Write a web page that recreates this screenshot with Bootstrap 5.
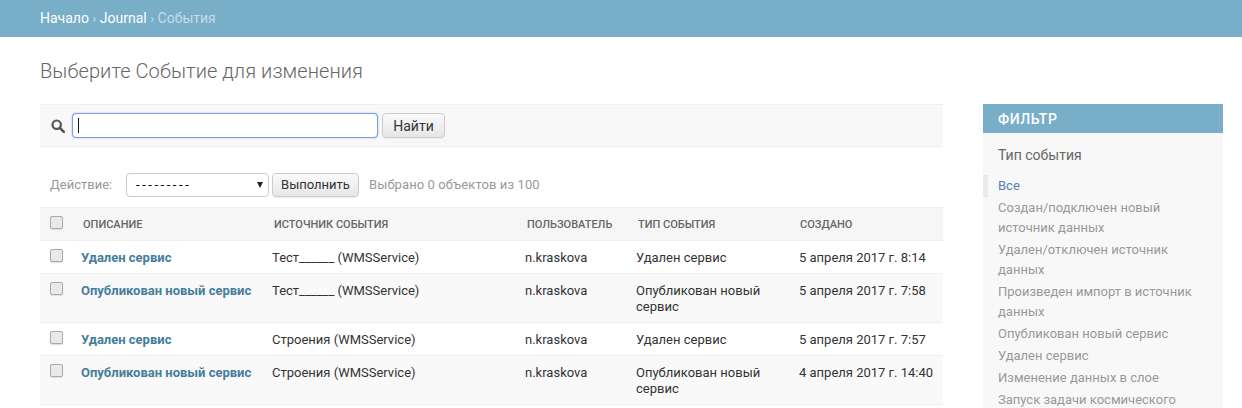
<!DOCTYPE html>
<html lang="ru">
<head>
<meta charset="utf-8">
<title>Выберите Событие для изменения</title>
<link href="https://cdn.jsdelivr.net/npm/bootstrap@5.3.0/dist/css/bootstrap.min.css" rel="stylesheet">
<style>
html,body{height:408px;overflow:hidden}
body{font-family:Roboto,"Liberation Sans",sans-serif;font-size:13px;color:#333;background:#fff}
.adm-top{height:37px;background:#79aec8;padding:0 40px;font-size:14px;line-height:37px;color:#c4dce8}
.adm-top a{color:#fff;text-decoration:none}
.adm-top .sep{color:#c4dce8;font-size:13px}
.adm-wrap{padding:0 19px 0 40px}
.adm-title{font-size:20px;font-weight:300;color:#666;line-height:24px;margin:22px 0 21px;letter-spacing:.07px}
.adm-main{width:903px}
.adm-side{width:240px;height:304px;background:#f8f8f8;overflow:hidden}
.adm-search{height:43px;background:#f8f8f8;border-top:1px solid #eee;border-bottom:1px solid #eee;padding:0 10px;gap:4px}
.adm-lens{margin:0 -4px 0 1px;flex-shrink:0}
.adm-field{position:relative;margin-left:7px}
.adm-field .form-control{width:306px;height:25px;padding:2px 5px;border:1px solid #7a9fdc;border-radius:4px;box-shadow:0 0 2px #9dbcf0;font-size:13px;caret-color:#000}
.adm-caret{position:absolute;left:6px;top:5px;width:1px;height:15px;background:#111}
.adm-btn{font-size:13px;line-height:16px;padding:3px 9px;border:1px solid #ccc;border-radius:4px;color:#333;background:linear-gradient(#fafafa,#e6e6e6);box-shadow:0 1px 0 #eee}
.adm-search .adm-btn{height:25px;width:63px;padding:0;font-size:14px}
.adm-actions{height:24px;margin-top:26px;padding-left:10px;color:#999}
.adm-actions label{width:76px;font-size:13px}
.adm-select{width:143px;height:24px;border:1px solid #ccc;border-radius:4px;background:#fff;padding:0 9px;color:#000;font-size:13px;line-height:22px;position:relative;margin-right:3px;letter-spacing:2.55px}
.adm-select::after{content:"";position:absolute;right:5px;top:8px;border:3px solid transparent;border-top:6px solid #222;border-bottom:0}
.adm-actions .adm-btn{height:24px;width:87px;padding:0}
.adm-count{margin-left:10px;letter-spacing:.1px}
.adm-table{margin:10px 0 0;table-layout:fixed;width:903px;--bs-table-bg:transparent;color:#333}
.adm-table th,.adm-table td{border:0;border-bottom:1px solid #eee;font-size:13px;line-height:16px;vertical-align:top}
.adm-table thead th{background:#f6f6f6;height:33px;border-top:1px solid #eee;padding:9px 2px 0;font-size:11px;font-weight:500;color:#666;text-transform:uppercase;line-height:16px}
.adm-table thead th:last-child{padding-left:1px}
.adm-table td,.adm-table tbody th{padding:9px 0 7px;height:33px}
.adm-table tbody th a{color:#447e9b;font-weight:700;text-decoration:none}
.adm-table tbody th{font-weight:700}
.adm-table tbody tr:nth-child(even){background:#f9f9f9}
.adm-table .form-check-input{width:13px;height:13px;margin:-1px 0 0 10px;border:1px solid #aaa;border-radius:2px;background:#e9e9e9;box-shadow:0 1px 1px #ddd;display:block}
.adm-table thead .form-check-input{margin-left:8px}
.adm-side h2{background:#79aec8;color:#fff;height:29px;line-height:30px;margin:0;padding:0 15px;font-size:14px;font-weight:500;letter-spacing:.6px;text-transform:uppercase}
.adm-side h3{font-size:14px;font-weight:400;color:#666;margin:14px 15px 0;line-height:16px}
.adm-side ul{margin:12px 0 0;padding:0}
.adm-side li{padding:1px 15px;line-height:20px;color:#999}
.adm-side li a{color:#999;text-decoration:none}
.adm-side li.on{border-left:5px solid #eaeaea;padding-left:10px}
.adm-side li.on a{color:#5b80b2}
</style>
</head>
<body>
<div class="adm-top"><a href="#">Начало</a> <span class="sep">›</span> <a href="#">Journal</a> <span class="sep">›</span> События</div>
<div class="adm-wrap">
  <h1 class="adm-title">Выберите Событие для изменения</h1>
  <div class="d-flex justify-content-between">
    <div class="adm-main">
      <form class="adm-search d-flex align-items-center">
        <svg class="adm-lens" width="14" height="14" viewBox="0 0 14 14" aria-hidden="true"><circle cx="5.7" cy="5.7" r="4.2" fill="none" stroke="#555" stroke-width="2.2"/><path d="M8.8 8.8 12.8 12.8" stroke="#555" stroke-width="2.6" stroke-linecap="round"/></svg>
        <div class="adm-field"><input class="form-control" type="text" aria-label="Поиск"><span class="adm-caret"></span></div>
        <button class="adm-btn" type="button">Найти</button>
      </form>
      <div class="adm-actions d-flex align-items-center">
        <label>Действие:</label>
        <div class="adm-select">---------</div>
        <button class="adm-btn" type="button">Выполнить</button>
        <span class="adm-count">Выбрано 0 объектов из 100</span>
      </div>
      <table class="table adm-table">
        <colgroup><col style="width:41px"><col style="width:191px"><col style="width:253px"><col style="width:111px"><col style="width:163px"><col></colgroup>
        <thead><tr>
          <th><input class="form-check-input" type="checkbox" aria-label="Все"></th>
          <th>Описание</th><th>Источник события</th><th>Пользователь</th><th>Тип события</th><th>Создано</th>
        </tr></thead>
        <tbody>
          <tr><td><input class="form-check-input" type="checkbox" aria-label="Выбрать"></td><th><a href="#">Удален сервис</a></th><td>Тест______ (WMSService)</td><td>n.kraskova</td><td>Удален сервис</td><td>5 апреля 2017 г. 8:14</td></tr>
          <tr><td><input class="form-check-input" type="checkbox" aria-label="Выбрать"></td><th><a href="#">Опубликован новый сервис</a></th><td>Тест______ (WMSService)</td><td>n.kraskova</td><td>Опубликован новый сервис</td><td>5 апреля 2017 г. 7:58</td></tr>
          <tr><td><input class="form-check-input" type="checkbox" aria-label="Выбрать"></td><th><a href="#">Удален сервис</a></th><td>Строения (WMSService)</td><td>n.kraskova</td><td>Удален сервис</td><td>5 апреля 2017 г. 7:57</td></tr>
          <tr><td><input class="form-check-input" type="checkbox" aria-label="Выбрать"></td><th><a href="#">Опубликован новый сервис</a></th><td>Строения (WMSService)</td><td>n.kraskova</td><td>Опубликован новый сервис</td><td>4 апреля 2017 г. 14:40</td></tr>
        </tbody>
      </table>
    </div>
    <aside class="adm-side">
      <h2>Фильтр</h2>
      <h3>Тип события</h3>
      <ul class="list-unstyled">
        <li class="on"><a href="#">Все</a></li>
        <li><a href="#">Создан/подключен новый источник данных</a></li>
        <li><a href="#">Удален/отключен источник данных</a></li>
        <li><a href="#">Произведен импорт в источник данных</a></li>
        <li><a href="#">Опубликован новый сервис</a></li>
        <li><a href="#">Удален сервис</a></li>
        <li><a href="#">Изменение данных в слое</a></li>
        <li><a href="#">Запуск задачи космического</a></li>
      </ul>
    </aside>
  </div>
</div>
<script src="https://cdn.jsdelivr.net/npm/bootstrap@5.3.0/dist/js/bootstrap.bundle.min.js"></script>
</body>
</html>
